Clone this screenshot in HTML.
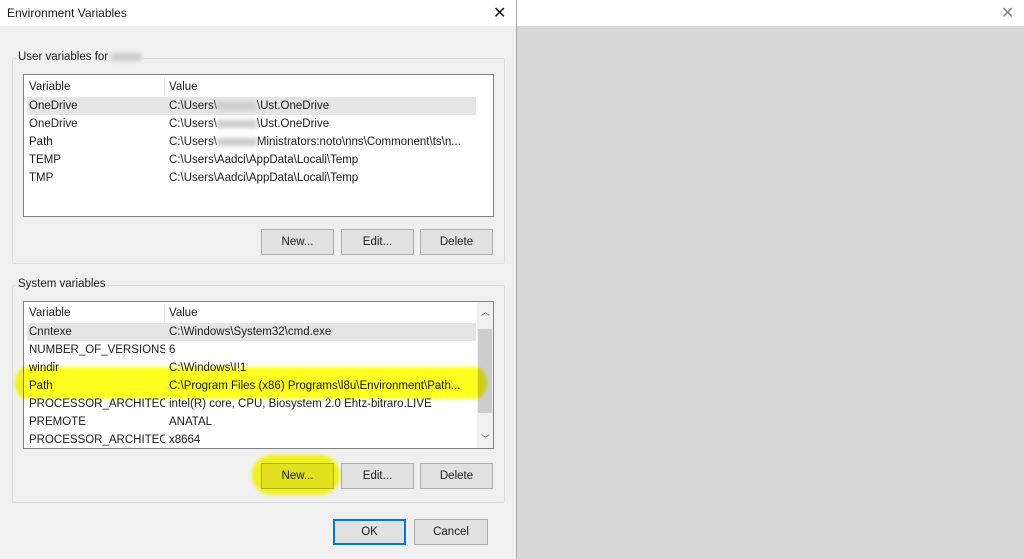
<!DOCTYPE html><html><head><style>
body{margin:0;width:1024px;height:559px;position:relative;overflow:hidden;background:#d8d8d8;font-family:"Liberation Sans",sans-serif;font-size:11.5px;color:#1a1a1a}
.a{position:absolute}
.dlg{left:0;top:0;width:516px;height:559px;background:#f0f0f0;border-right:1px solid #aaa}
.tb{left:0;top:0;width:516px;height:26px;background:#fff}
.grp{border:1px solid #dcdcdc;border-radius:2px}
.lb{background:#fff;border:1px solid #828282}
.btn{background:#e1e1e1;border:1px solid #adadad;text-align:center;line-height:25px;font-size:11.5px}
.row{position:absolute;left:5px;height:18px;line-height:18px;white-space:nowrap}
.c1{display:inline-block;width:136px;overflow:hidden;vertical-align:top}
.c2{position:absolute;left:140px}
.blur{display:inline-block;width:40px;height:8px;background:#ccc;filter:blur(2px);vertical-align:middle}
.hl{mix-blend-mode:multiply;background:#ffff20;filter:blur(1.5px)}
</style></head><body>
<div class="a" style="left:517px;top:0;width:507px;height:26px;background:#fff"></div>
<div class="a" style="left:1001px;top:3px;font-size:16px;color:#888">✕</div>
<div class="a dlg"></div>
<div class="a tb"></div>
<div class="a" style="left:7px;top:6px;font-size:12px">Environment Variables</div>
<div class="a" style="left:493px;top:3px;font-size:16px">✕</div>

<div class="a grp" style="left:12px;top:58px;width:491px;height:204px"></div>
<div class="a" style="left:16px;top:51px;background:#f0f0f0;padding:0 2px">User variables for <span class="blur" style="width:30px"></span></div>
<div class="a lb" style="left:23px;top:74px;width:469px;height:141px">
<div class="a" style="left:140px;top:3px;width:1px;height:18px;background:#e5e5e5"></div>
<div class="a" style="left:3px;top:22px;width:449px;height:18px;background:#e5e5e5"></div>
<div class="row" style="top:3px">Variable<span class="c2">Value</span></div>
<div class="row" style="top:22px">OneDrive<span class="c2">C:\Users\<span class="blur"></span>\Ust.OneDrive</span></div>
<div class="row" style="top:40px">OneDrive<span class="c2">C:\Users\<span class="blur"></span>\Ust.OneDrive</span></div>
<div class="row" style="top:58px">Path<span class="c2">C:\Users\<span class="blur"></span>Ministrators:noto\nns\Commonent\ts\n...</span></div>
<div class="row" style="top:76px">TEMP<span class="c2">C:\Users\Aadci\AppData\Locali\Temp</span></div>
<div class="row" style="top:94px">TMP<span class="c2">C:\Users\Aadci\AppData\Locali\Temp</span></div>
</div>
<div class="a btn" style="left:261px;top:229px;width:71px;height:24px">New...</div>
<div class="a btn" style="left:341px;top:229px;width:71px;height:24px">Edit...</div>
<div class="a btn" style="left:420px;top:229px;width:71px;height:24px">Delete</div>

<div class="a grp" style="left:12px;top:285px;width:491px;height:216px"></div>
<div class="a" style="left:16px;top:278px;background:#f0f0f0;padding:0 2px">System variables</div>
<div class="a lb" style="left:23px;top:301px;width:469px;height:146px">
<div class="a" style="left:140px;top:2px;width:1px;height:18px;background:#e5e5e5"></div>
<div class="a" style="left:3px;top:21px;width:449px;height:18px;background:#e5e5e5"></div>
<div class="a" style="left:453px;top:0;width:16px;height:146px;background:#f0f0f0"></div>
<div class="a" style="left:454px;top:27px;width:14px;height:84px;background:#cdcdcd"></div>
<div class="a" style="left:457px;top:3px;font-size:9px;color:#555">︿</div>
<div class="a" style="left:457px;top:130px;font-size:9px;color:#555">﹀</div>
<div class="row" style="top:2px"><span class="c1">Variable</span><span class="c2">Value</span></div>
<div class="row" style="top:21px"><span class="c1">Cnntexe</span><span class="c2">C:\Windows\System32\cmd.exe</span></div>
<div class="row" style="top:39px"><span class="c1">NUMBER_OF_VERSIONS</span><span class="c2">6</span></div>
<div class="row" style="top:57px"><span class="c1">windir</span><span class="c2">C:\Windows\I!1</span></div>
<div class="row" style="top:75px"><span class="c1">Path</span><span class="c2">C:\Program Files (x86) Programs\l8u\Environment\Path...</span></div>
<div class="row" style="top:93px"><span class="c1">PROCESSOR_ARCHITEC...</span><span class="c2">intel(R) core, CPU, Biosystem 2.0 Ehtz-bitraro.LIVE</span></div>
<div class="row" style="top:111px"><span class="c1">PREMOTE</span><span class="c2">ANATAL</span></div>
<div class="row" style="top:129px"><span class="c1">PROCESSOR_ARCHITEC...</span><span class="c2">x8664</span></div>
</div>
<div class="a btn" style="left:261px;top:463px;width:71px;height:24px">New...</div>
<div class="a btn" style="left:341px;top:463px;width:71px;height:24px">Edit...</div>
<div class="a btn" style="left:420px;top:463px;width:71px;height:24px">Delete</div>
<div class="a hl" style="left:15px;top:367px;width:472px;height:32px;border-radius:12px/16px"></div>
<div class="a hl" style="left:252px;top:455px;width:88px;height:40px;border-radius:30px"></div>

<div class="a btn" style="left:333px;top:519px;width:71px;height:24px;border:1px solid #0078d7;box-shadow:inset 0 0 0 1px #0078d7">OK</div>
<div class="a btn" style="left:414px;top:519px;width:72px;height:24px">Cancel</div>
</body></html>
